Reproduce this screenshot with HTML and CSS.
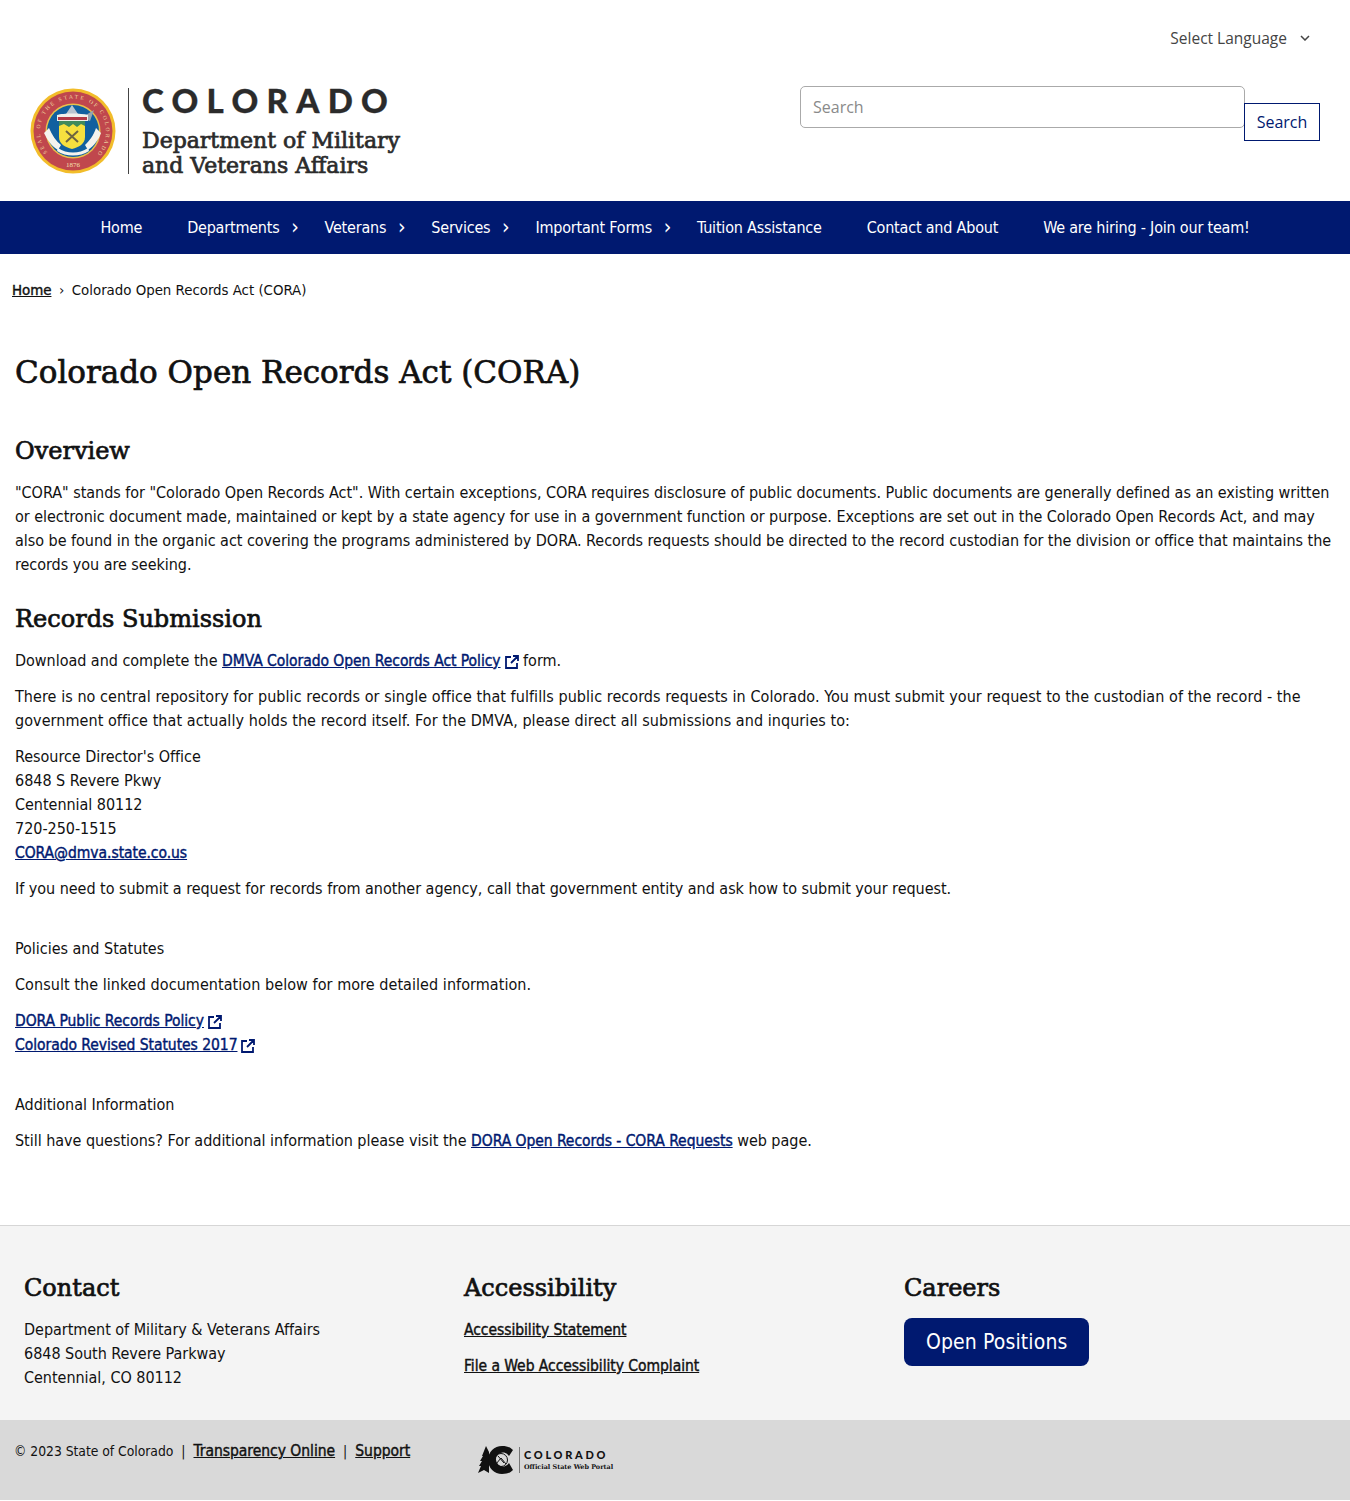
FILE: index.html
```html
<!DOCTYPE html>
<html lang="en">
<head>
<meta charset="utf-8">
<title>Colorado Open Records Act (CORA)</title>
<link rel="stylesheet" href="styles.css">
</head>
<body>
<header class="site-header">
  <div class="lang-row">
    <span class="lang">Select Language</span>
    <svg class="lang-chevron" width="10" height="6" viewBox="0 0 10 6"><path d="M1 1l4 4 4-4" fill="none" stroke="#444" stroke-width="1.5"/></svg>
  </div>
  <div class="brand-row">
    <a class="brand" href="#">
      <svg class="seal" width="86" height="86" viewBox="0 0 86 86">
        <defs><path id="seal-ring" d="M17.5 64.5a33 33 0 1 1 51 0"/></defs>
        <circle cx="43" cy="43" r="42.5" fill="#f2bd2a"/>
        <circle cx="43" cy="43" r="39.5" fill="#c0474d"/>
        <circle cx="43" cy="43" r="27.5" fill="#e9c04a"/>
        <circle cx="43" cy="43" r="26" fill="#11609f"/>
        <text class="seal-text" font-size="5.6" fill="#f0d9a0"><textPath href="#seal-ring" textLength="150">SEAL OF THE STATE OF COLORADO</textPath></text>
        <path d="M42 17l6 9H36z" fill="#b9c5cf"/>
        <path d="M51 30l13-8-4 11z" fill="#98a5b0"/>
        <path d="M27 27c6-2 24-2 31 0v6H27z" fill="#f1f0ea"/>
        <path d="M28 29h29v3H28z" fill="#b03a47"/>
        <path d="M29 33h26v16c0 7-6 10-13 12-7-2-13-5-13-12z" fill="#f6e03f"/>
        <path d="M29 33h26v5l-4-2-4 3-4-3-4 3-5-3-5 2z" fill="#3f8a5c"/>
        <path d="M36 43l12 11M48 43L36 54" stroke="#6e6440" stroke-width="2"/>
        <path d="M19 40c3 7 7 13 12 17l-3 5c-7-4-11-11-14-17zM66 40c-2 7-7 13-11 17l3 5c6-4 11-11 13-17z" fill="#f4f3ee"/>
        <path d="M28 60c9 6 21 6 30 0l1 3c-9 6-23 6-32 0z" fill="#f4f3ee"/>
        <text class="seal-text" x="43" y="79" font-size="7" fill="#f5e2b0" text-anchor="middle">1876</text>
      </svg>
      <span class="brand-rule"></span>
      <span class="brand-text">
        <span class="brand-state">COLORADO</span>
        <span class="brand-dept">Department of Military<br>and Veterans Affairs</span>
      </span>
    </a>
    <form class="search">
      <input class="search-input" type="text" placeholder="Search">
      <button class="search-btn" type="button">Search</button>
    </form>
  </div>
</header>
<nav class="main-nav">
  <a href="#">Home</a>
  <a class="has-sub" href="#">Departments</a>
  <a class="has-sub" href="#">Veterans</a>
  <a class="has-sub" href="#">Services</a>
  <a class="has-sub" href="#">Important Forms</a>
  <a href="#">Tuition Assistance</a>
  <a href="#">Contact and About</a>
  <a href="#">We are hiring - Join our team!</a>
</nav>
<div class="crumbs"><a href="#">Home</a><span class="crumb-sep">›</span><span>Colorado Open Records Act (CORA)</span></div>
<main class="content">
  <h1>Colorado Open Records Act (CORA)</h1>
  <h2>Overview</h2>
  <p>"CORA" stands for "Colorado Open Records Act". With certain exceptions, CORA requires disclosure of public documents. Public documents are generally defined as an existing written or electronic document made, maintained or kept by a state agency for use in a government function or purpose. Exceptions are set out in the Colorado Open Records Act, and may also be found in the organic act covering the programs administered by DORA. Records requests should be directed to the record custodian for the division or office that maintains the records you are seeking.</p>
  <h2>Records Submission</h2>
  <p>Download and complete the <a class="link ext" href="#">DMVA Colorado Open Records Act Policy</a><svg class="ext-icon" width="14" height="14" viewBox="0 0 14 14"><path d="M6 2H1v11h11V8M8 1h5v5M13 1L6 8" fill="none" stroke="#001970" stroke-width="1.8"/></svg> form.</p>
  <p class="wide">There is no central repository for public records or single office that fulfills public records requests in Colorado. You must submit your request to the custodian of the record - the government office that actually holds the record itself. For the DMVA, please direct all submissions and inquries to:</p>
  <p>Resource Director's Office<br>6848 S Revere Pkwy<br>Centennial 80112<br>720-250-1515<br><a class="link" href="#">CORA@dmva.state.co.us</a></p>
  <p>If you need to submit a request for records from another agency, call that government entity and ask how to submit your request.</p>
  <p class="section-start">Policies and Statutes</p>
  <p class="wide">Consult the linked documentation below for more detailed information.</p>
  <p><a class="link ext" href="#">DORA Public Records Policy</a><svg class="ext-icon" width="14" height="14" viewBox="0 0 14 14"><path d="M6 2H1v11h11V8M8 1h5v5M13 1L6 8" fill="none" stroke="#001970" stroke-width="1.8"/></svg><br><a class="link ext" href="#">Colorado Revised Statutes 2017</a><svg class="ext-icon" width="14" height="14" viewBox="0 0 14 14"><path d="M6 2H1v11h11V8M8 1h5v5M13 1L6 8" fill="none" stroke="#001970" stroke-width="1.8"/></svg></p>
  <p class="section-start">Additional Information</p>
  <p>Still have questions? For additional information please visit the <a class="link" href="#">DORA Open Records - CORA Requests</a> web page.</p>
</main>
<footer>
  <div class="foot-main">
    <section>
      <h3>Contact</h3>
      <p>Department of Military &amp; Veterans Affairs<br>6848 South Revere Parkway<br>Centennial, CO 80112</p>
    </section>
    <section>
      <h3>Accessibility</h3>
      <p><a class="foot-link" href="#">Accessibility Statement</a></p>
      <p><a class="foot-link" href="#">File a Web Accessibility Complaint</a></p>
    </section>
    <section>
      <h3>Careers</h3>
      <a class="careers-btn" href="#">Open Positions</a>
    </section>
  </div>
  <div class="foot-bar">
    <div class="foot-legal">© 2023 State of Colorado<span class="pipe">|</span><a href="#">Transparency Online</a><span class="pipe">|</span><a href="#">Support</a></div>
    <div class="portal">
      <svg class="portal-mark" width="36" height="30" viewBox="0 0 36 30">
        <path d="M8 1l3 6v21l-5-3-6 3 3-7H1l3-5H2l3-5H4z" fill="#111"/>
        <path d="M24 1a14 14 0 0 0 0 28c5 0 8-1 11-4l-4-7a7 7 0 1 1 0-7l4-6c-3-3-6-4-11-4z" fill="#111"/>
        <circle cx="23" cy="15" r="6.5" fill="none" stroke="#111" stroke-width="1"/>
        <path d="M18 19l5-6 5 6M20 11l6 7" fill="none" stroke="#111" stroke-width="1"/>
      </svg>
      <span class="portal-rule"></span>
      <span class="portal-text"><span class="portal-state">COLORADO</span><span class="portal-sub">Official State Web Portal</span></span>
    </div>
  </div>
</footer>
</body>
</html>
```
FILE: styles.css
```css
* { box-sizing: border-box; }
html, body { margin: 0; padding: 0; }
body {
  font-family: "DejaVu Sans", sans-serif;
  font-stretch: condensed;
  font-size: 16px;
  line-height: 24px;
  letter-spacing: -0.03px;
  color: #111;
  background: #fff;
}
.site-header { height: 201px; padding: 26px 30px 0; }
.lang-row { display: flex; justify-content: flex-end; align-items: center; gap: 13px; height: 24px; padding-right: 10px; color: #444; font-family: "Open Sans", sans-serif; font-stretch: normal; font-size: 15.5px; letter-spacing: 0; }
.brand-row { display: flex; justify-content: space-between; align-items: flex-start; margin-top: 36px; }
.brand { display: flex; align-items: stretch; text-decoration: none; color: #2b2b2b; height: 86px; margin-top: 2px; }
.seal { flex: none; }
.seal-text { font-family: "Liberation Serif", serif; font-stretch: normal; letter-spacing: 0; }
.brand-rule { width: 1px; background: #444; margin: 0 13px 0 12px; }
.brand-text { display: flex; flex-direction: column; }
.brand-state { font-family: Lato, sans-serif; font-stretch: normal; font-weight: 900; font-size: 33px; line-height: 27px; letter-spacing: 8.3px; margin-top: -1px; -webkit-text-stroke: 0.3px #2b2b2b; }
.brand-dept { font-family: "DejaVu Serif", serif; font-stretch: normal; font-weight: 400; -webkit-text-stroke: 0.7px #2b2b2b; font-size: 22px; line-height: 25px; letter-spacing: 0; margin-top: 14px; }
.search { display: flex; align-items: flex-end; height: 55px; margin-left: auto; margin-top: 0; }
.search-input { width: 445px; height: 42px; border: 1px solid #aaa; border-radius: 5px; padding: 0 12px; font-family: "Open Sans", sans-serif; font-stretch: normal; font-size: 16px; margin-bottom: 13px; }
.search-input::placeholder { color: #8a8a8a; opacity: 1; }
.search-btn { width: 76px; height: 38px; border: 1px solid #001970; background: #fff; color: #001970; font-family: "Open Sans", sans-serif; font-stretch: normal; font-size: 16px; padding: 0; margin-left: -1px; }
.main-nav { height: 53px; background: #001970; display: flex; justify-content: center; align-items: center; gap: 45px; letter-spacing: -0.2px; }
.main-nav a { color: #fff; text-decoration: none; }
.has-sub { position: relative; }
.has-sub::after { content: "›"; position: absolute; right: -19px; top: -1px; font-size: 21px; }
.crumbs { padding: 24px 12px 0; font-size: 14.9px; height: 72px; }
.crumbs a { color: #111; font-weight: 400; -webkit-text-stroke: 0.4px #111; }
.crumb-sep { margin: 0 7.5px; }
.content { padding: 0 15px; height: 899px; }
h1, h2, h3 { font-family: "DejaVu Serif", serif; font-stretch: normal; font-weight: 400; color: #111; margin: 0; letter-spacing: 0; -webkit-text-stroke: 0.7px #111; }
h1 { font-size: 31px; line-height: 40px; padding-top: 26px; margin-bottom: 45px; }
h2 { font-size: 24px; line-height: 28px; margin: 0 0 16px; }
.content p { margin: 0 0 12px; }
.content .wide { letter-spacing: 0.06px; }
.content p + h2 { margin-top: 28px; }
.section-start { margin-top: 36px !important; }
.link { color: #001970; font-size: 15.5px; font-weight: 400; -webkit-text-stroke: 0.4px #001970; letter-spacing: -0.05px; }
.ext-icon { margin-left: 4px; vertical-align: -3px; }
footer { background: #f4f4f4; border-top: 1px solid #d6d6d6; }
.foot-main { display: grid; grid-template-columns: repeat(3, 440px); padding: 46px 24px 0; height: 194px; }
footer h3 { font-size: 24px; line-height: 32px; margin-bottom: 14px; }
.foot-main p { margin: 0 0 12px; }
.foot-link { color: #111; font-size: 15.5px; font-weight: 400; -webkit-text-stroke: 0.4px #111; letter-spacing: -0.05px; }
.careers-btn { display: inline-flex; align-items: center; height: 48px; padding: 0 22px; background: #001970; color: #fff; border-radius: 8px; text-decoration: none; font-size: 21px; letter-spacing: 0.12px; margin-top: 0; }
.foot-bar { background: #d9d9d9; height: 80px; padding: 19px 15px 0 14px; display: flex; align-items: flex-start; }
.foot-legal { font-size: 13.8px; width: 464px; }
.foot-legal a { color: #111; font-weight: 400; font-size: 15.5px; -webkit-text-stroke: 0.4px #111; }
.pipe { margin: 0 8px; }
.portal { display: flex; align-items: center; margin-top: 6px; color: #111; }
.portal-rule { width: 1px; height: 26px; background: #777; margin: 0 4px 0 5px; }
.portal-text { display: flex; flex-direction: column; padding-top: 2px; }
.portal-state { font-family: Lato, sans-serif; font-stretch: normal; font-weight: 900; font-size: 11px; line-height: 12px; letter-spacing: 2.7px; }
.portal-sub { font-family: "DejaVu Serif", serif; font-stretch: normal; letter-spacing: 0; font-weight: 700; font-size: 6.45px; line-height: 13px; }
```
